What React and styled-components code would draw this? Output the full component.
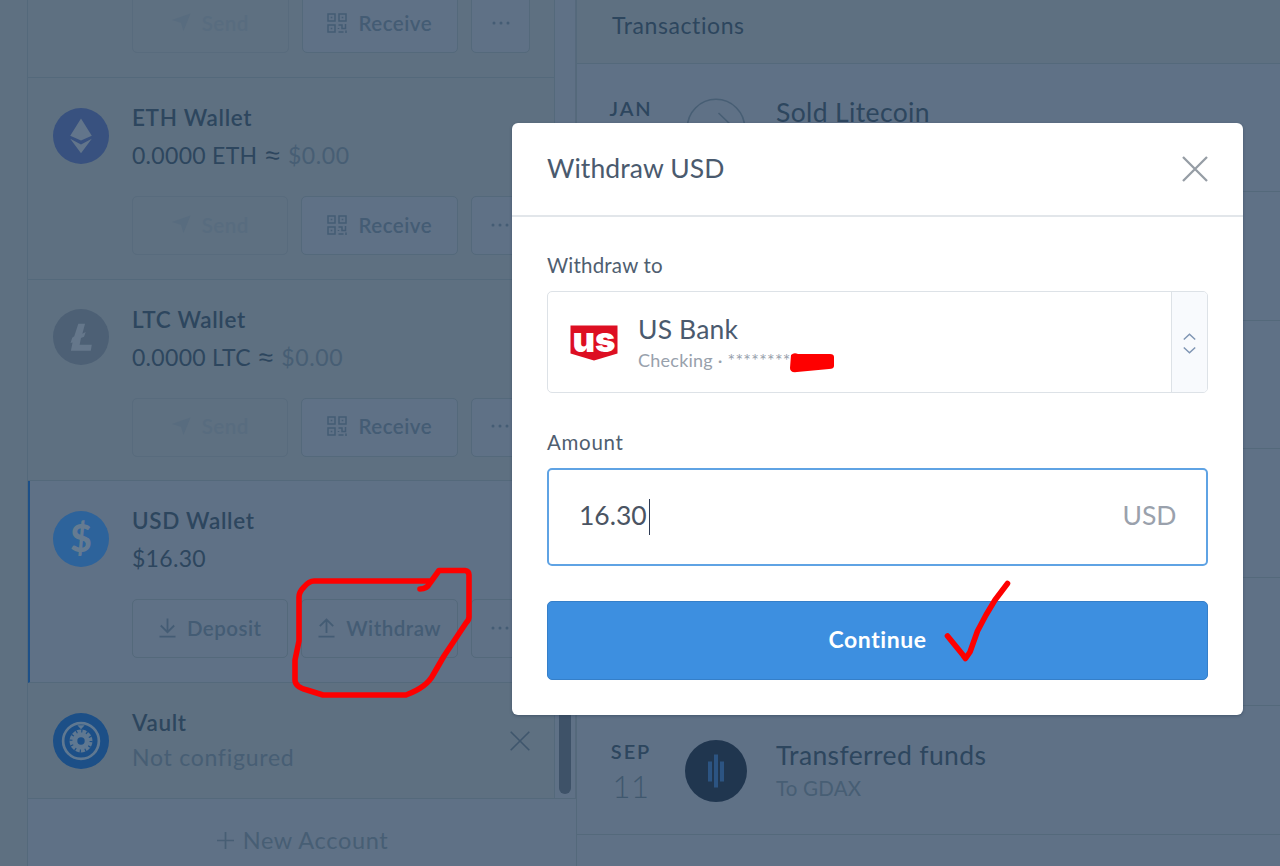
import React from 'react'
import styled, { createGlobalStyle } from 'styled-components';

const page = "#5e7081";
const card = "#5f7186";
const line = "#54697b";
const ink = "#2d465e";
const muted = "#475e74";
const blue = "#3d8fe0";

const GlobalStyle = createGlobalStyle`
    * { box-sizing:border-box; }
    body {
        margin:0;
        background:${page};
        font-family:Lato, "Open Sans", sans-serif;
    }
`
const Screen = styled.div`
    position:relative;
    width:1280px;
    height:866px;
    overflow:hidden;
    display:flex;
    background:${page};
`
const Sidebar = styled.div`
    width:550px;
    margin-left:27px;
    height:866px;
    display:flex;
    flex-direction:column;
    border-left:1px solid ${line};
    border-right:1px solid ${line};
    background:${card};
`
const Scroller = styled.div`
    height:799px;
    display:flex;
    border-bottom:1px solid ${line};
`
const Accounts = styled.div`
    width:527px;
    height:799px;
    overflow:hidden;
    display:flex;
    flex-direction:column;
    justify-content:flex-end;
    border-right:1px solid ${line};
`
const Track = styled.div`
    flex:1;
    display:flex;
    justify-content:center;
    align-items:flex-end;
    padding-bottom:4px;
    border-right:1px solid #56697c;
`
const Thumb = styled.div`
    width:12px;
    height:600px;
    border-radius:6px;
    background:#3e5268;
`
const Account = styled.div`
    flex:none;
    height:${p => p.$short ? "116px" : "201.67px"};
    display:flex;
    padding-left:${p => p.$active ? "22.6px" : "24.6px"};
    border-left:${p => p.$active ? "2px solid #1d5088" : "none"};
    border-bottom:1px solid ${line};
    background:${p => p.$active ? card : page};
`
const LastActions = styled.div`
    flex:none;
    height:78px;
    display:flex;
    align-items:flex-end;
    padding:0 0 24px 104px;
    border-bottom:1px solid ${line};
    background:${page};
`
const Coin = styled.svg`
    flex:none;
    width:56px;
    height:56px;
    margin-top:29.6px;
`
const Details = styled.div`
    flex:1;
    padding:26px 0 0 23.4px;
`
const Name = styled.div`
    height:28px;
    line-height:28px;
    font-size:22.5px;
    font-weight:600;
    letter-spacing:0.68px;
    color:${ink};
    white-space:nowrap;
`
const Balance = styled.div`
    height:38px;
    line-height:38px;
    margin-top:${p => p.$dim ? "0.9px" : "3.9px"};
    font-size:23px;
    letter-spacing:${p => p.$dim ? "0.75px" : "0.3px"};
    color:${p => p.$dim ? muted : ink};
    white-space:nowrap;
`
const Approx = styled.span`
    margin:0 2px 0 1.5px;
    font-family:"Liberation Sans", Arial, sans-serif;
    font-size:26px;
    line-height:1;
`
const Dim = styled.span`
    letter-spacing:0.6px;
    color:${muted};
`
const Actions = styled.div`
    display:flex;
    gap:13px;
    margin-top:${p => p.$flush ? "0" : "22.1px"};
`
const Button = styled.div`
    width:${p => p.$small ? "59px" : "156.5px"};
    height:59px;
    display:flex;
    justify-content:center;
    align-items:center;
    gap:11px;
    padding-bottom:2px;
    border:1px solid ${p => p.$off ? "#586b7d" : line};
    border-radius:5px;
    background:${p => p.$off ? "transparent" : card};
    color:${p => p.$off ? "#586c7f" : "#445c74"};
    font-size:20.5px;
    font-weight:600;
    letter-spacing:0.5px;
`
const Dismiss = styled.svg`
    width:20px;
    height:20px;
    margin:47.5px 24px 0 0;
`
const NewAccount = styled.div`
    height:67px;
    display:flex;
    justify-content:center;
    align-items:center;
    gap:9px;
    padding:15px 0 0 1px;
    color:${muted};
    font-size:23.5px;
    letter-spacing:0.65px;
`
const Transactions = styled.div`
    flex:1;
    height:866px;
    display:flex;
    flex-direction:column;
    background:${card};
`
const Heading = styled.div`
    flex:none;
    height:63.5px;
    padding:9px 0 0 35px;
    line-height:32px;
    font-size:23px;
    letter-spacing:0.6px;
    color:${ink};
    background:${page};
    border-bottom:1px solid ${line};
`
const Entry = styled.div`
    flex:none;
    height:128.6px;
    display:flex;
    border-bottom:1px solid ${line};
`
const When = styled.div`
    width:108px;
    padding-top:31.6px;
    text-align:center;
    color:${ink};
`
const Month = styled.div`
    line-height:26px;
    font-size:20px;
    font-weight:600;
    letter-spacing:1.9px;
`
const Day = styled.div`
    line-height:44px;
    font-size:31px;
    font-weight:300;
    letter-spacing:0.5px;
    color:#40586e;
`
const Badge = styled.svg`
    flex:none;
    width:62px;
    height:62px;
    margin-top:33.5px;
`
const What = styled.div`
    padding:32.8px 0 0 29px;
`
const Summary = styled.div`
    line-height:32px;
    font-size:26.5px;
    letter-spacing:0.37px;
    color:${ink};
`
const Note = styled.div`
    line-height:34px;
    font-size:20.5px;
    letter-spacing:0.2px;
    color:${muted};
`
const Modal = styled.div`
    position:absolute;
    left:512px;
    top:123px;
    width:731px;
    height:592px;
    border-radius:6px;
    background:#fff;
    box-shadow:0 1px 3px rgba(35,55,80,0.45);
`
const ModalHeader = styled.div`
    height:94px;
    display:flex;
    justify-content:space-between;
    align-items:center;
    padding:0 35px;
    border-bottom:2px solid #e2e6ea;
`
const Title = styled.div`
    padding-bottom:2px;
    color:#4a5a6e;
    font-size:26.5px;
    letter-spacing:0.08px;
`
const Form = styled.div`
    display:flex;
    flex-direction:column;
    padding:34px 35px 0;
`
const Label = styled.div`
    height:28px;
    line-height:28px;
    font-size:20.5px;
    letter-spacing:${p => p.$wide ? "0.7px" : "0.2px"};
    color:#4f5e70;
`
const Select = styled.div`
    height:102px;
    display:flex;
    margin:12px 0 35px;
    border:1.5px solid #dde2e7;
    border-radius:5px;
    overflow:hidden;
`
const Bank = styled.div`
    flex:1;
    display:flex;
    align-items:center;
    padding:2px 0 0 22px;
`
const BankLogo = styled.svg`
    width:48px;
    height:36px;
    margin-bottom:1px;
    overflow:visible;
`
const BankText = styled.div`
    margin-left:20px;
`
const BankName = styled.div`
    line-height:34px;
    font-size:26.5px;
    letter-spacing:0.15px;
    color:#4a5a6e;
`
const BankNote = styled.div`
    line-height:28px;
    font-size:18px;
    letter-spacing:0.24px;
    color:#98a1ac;
    white-space:nowrap;
`
const Stepper = styled.div`
    width:36px;
    display:flex;
    justify-content:center;
    align-items:center;
    padding-top:2px;
    border-left:1px solid #dde2e7;
    background:#f8fafd;
`
const Amount = styled.div`
    height:98px;
    display:flex;
    align-items:center;
    margin:12px 0 35px;
    padding:0 29.5px 4px 30px;
    border:2px solid #5fa3e4;
    border-radius:5px;
    color:#4a5462;
    font-size:26.5px;
`
const Caret = styled.div`
    width:1.5px;
    height:36px;
    margin:4px 0 0 2px;
    background:#2f3c55;
`
const Unit = styled.div`
    margin-left:auto;
    color:#9aa1ac;
`
const Continue = styled.div`
    height:79px;
    display:flex;
    justify-content:center;
    align-items:center;
    padding-bottom:4px;
    border:1px solid #357fc9;
    border-radius:5px;
    background:${blue};
    color:#fff;
    font-size:23px;
    font-weight:700;
    letter-spacing:0.55px;
`
const Marks = styled.svg`
    position:absolute;
    left:0;
    top:0;
`

const SendIcon = () => (
    <svg width="19" height="19" viewBox="0 0 19 19" fill="currentColor">
        <path d="M0 7 18.5 0.5 11.5 18 9 9.7Z" />
    </svg>
)
const QrIcon = () => (
    <svg width="20" height="20" viewBox="0 0 20 20" fill="none" stroke="currentColor" strokeWidth="1.5">
        <path d="M1 1h7v7H1zM12 1h7v7h-7zM1 12h7v7H1z" />
        <path d="M3.7 4.5h1.6M14.7 4.5h1.6M3.7 15.5h1.6M11.500 12h3.500v3.500h3.500V11M11.500 15v1M11.500 19h5M19 17.500V20" />
    </svg>
)
const DotsIcon = () => (
    <svg width="18" height="4" viewBox="0 0 18 4" fill="currentColor">
        <circle cx="2" cy="2" r="1.5" /><circle cx="9" cy="2" r="1.5" /><circle cx="16" cy="2" r="1.5" />
    </svg>
)
const DepositIcon = () => (
    <svg width="17" height="20" viewBox="0 0 17 20" fill="none" stroke="currentColor" strokeWidth="1.8">
        <path d="M8.5 0.5V14M1.8 7.5l6.7 6.7 6.7-6.7M0.5 18.7h16" />
    </svg>
)
const WithdrawIcon = () => (
    <svg width="17" height="20" viewBox="0 0 17 20" fill="none" stroke="currentColor" strokeWidth="1.8">
        <path d="M8.5 15V1.5M1.8 8.2l6.7-6.7 6.7 6.7M0.5 18.7h16" />
    </svg>
)

const EthCoin = () => (
    <Coin viewBox="0 0 166 166">
        <circle cx="83" cy="83" r="83" fill="#38517f" />
        <path d="M83 31 115 82 83 96 51 82ZM51 91 83 108 115 91 83 134Z" fill="#62758b" />
    </Coin>
)
const LtcCoin = () => (
    <Coin viewBox="0 0 166 166">
        <circle cx="83" cy="83" r="83" fill="#4d6075" />
        <path d="M75 44H95L87 73 97 68 92 82 83 86 79 106H115L112 124H53L58 99 52 101 57 85 63 81Z" fill="#65778b" />
    </Coin>
)
const UsdCoin = () => (
    <Coin viewBox="0 0 56 56">
        <circle cx="28" cy="28" r="28" fill="#2d639b" />
        <text x="28" y="41" textAnchor="middle" fontSize="37" fontWeight="900" fill="#657b91">$</text>
    </Coin>
)
const VaultCoin = () => (
    <Coin viewBox="0 0 166 166">
        <circle cx="83" cy="83" r="83" fill="#1c4f87" />
        <circle cx="83" cy="83" r="53" fill="none" stroke="#5f7891" strokeWidth="8" />
        <path d="M72 36h22l-11 12z" fill="#5f7891" />
        <circle cx="83" cy="83" r="34" fill="#5f7891" />
        <circle cx="83" cy="83" r="30" fill="none" stroke="#1c4f87" strokeWidth="9" strokeDasharray="3.5 12.208" />
        <circle cx="83" cy="83" r="11" fill="#1c4f87" />
    </Coin>
)

const CryptoActions = ({ flush }) => (
    <Actions $flush={flush}>
        <Button $off><SendIcon />Send</Button>
        <Button><QrIcon />Receive</Button>
        <Button $small><DotsIcon /></Button>
    </Actions>
)

const CryptoAccount = ({ coin, name, balance }) => (
    <Account>
        {coin}
        <Details>
            <Name>{name}</Name>
            <Balance>{balance} <Approx>≈</Approx> <Dim>$0.00</Dim></Balance>
            <CryptoActions />
        </Details>
    </Account>
)

const App = () => {
  return (
    <Screen>
        <GlobalStyle />
        <Sidebar>
            <Scroller>
                <Accounts>
                    <LastActions><CryptoActions flush /></LastActions>
                    <CryptoAccount name="ETH Wallet" balance="0.0000 ETH" coin={<EthCoin />} />
                    <CryptoAccount name="LTC Wallet" balance="0.0000 LTC" coin={<LtcCoin />} />
                    <Account $active>
                        <UsdCoin />
                        <Details>
                            <Name>USD Wallet</Name>
                            <Balance>$16.30</Balance>
                            <Actions>
                                <Button><DepositIcon />Deposit</Button>
                                <Button><WithdrawIcon />Withdraw</Button>
                                <Button $small><DotsIcon /></Button>
                            </Actions>
                        </Details>
                    </Account>
                    <Account $short>
                        <VaultCoin />
                        <Details>
                            <Name>Vault</Name>
                            <Balance $dim>Not configured</Balance>
                        </Details>
                        <Dismiss viewBox="0 0 20 20" stroke="#3f566d" strokeWidth="1.6">
                            <path d="M0.7 0.7 19.3 19.3M19.3 0.7 0.7 19.3" />
                        </Dismiss>
                    </Account>
                </Accounts>
                <Track><Thumb /></Track>
            </Scroller>
            <NewAccount>
                <svg width="17" height="17" viewBox="0 0 17 17" stroke="currentColor" strokeWidth="1.7">
                    <path d="M8.5 0v17M0 8.5h17" />
                </svg>
                New Account
            </NewAccount>
        </Sidebar>
        <Transactions>
            <Heading>Transactions</Heading>
            <Entry>
                <When><Month>JAN</Month></When>
                <Badge viewBox="0 0 62 62" fill="none" stroke={muted} strokeWidth="1.6">
                    <circle cx="31" cy="31" r="28.7" />
                    <path d="M17 31h28M33.5 16 46 28" />
                </Badge>
                <What><Summary>Sold Litecoin</Summary></What>
            </Entry>
            <Entry />
            <Entry />
            <Entry />
            <Entry />
            <Entry>
                <When><Month>SEP</Month><Day>11</Day></When>
                <Badge viewBox="0 0 62 62">
                    <circle cx="31" cy="31" r="31" fill="#20364f" />
                    <path d="M25 21.5v20M31 14.5v33M37 21.5v20" stroke="#2c5482" strokeWidth="4" />
                </Badge>
                <What>
                    <Summary>Transferred funds</Summary>
                    <Note>To GDAX</Note>
                </What>
            </Entry>
        </Transactions>
        <Modal>
            <ModalHeader>
                <Title>Withdraw USD</Title>
                <svg width="26" height="26" viewBox="0 0 26 26" stroke="#969da5" strokeWidth="2.3">
                    <path d="M1 1 25 25M25 1 1 25" />
                </svg>
            </ModalHeader>
            <Form>
                <Label>Withdraw to</Label>
                <Select>
                    <Bank>
                        <BankLogo viewBox="0 0 48 36">
                            <path d="M0.5 0.5h47v28L24 35.5 0.5 28.5z" fill="#dd0f22" />
                            <text x="24" y="27" textAnchor="middle" textLength="43" lengthAdjust="spacingAndGlyphs" fontFamily="Inter, sans-serif" fontSize="35" fontWeight="900" fill="#fff">us</text>
                        </BankLogo>
                        <BankText>
                            <BankName>US Bank</BankName>
                            <BankNote>Checking · ********</BankNote>
                        </BankText>
                    </Bank>
                    <Stepper>
                        <svg width="13" height="21" viewBox="0 0 13 21" fill="none" stroke="#7f95b3" strokeWidth="1.5">
                            <path d="M0.8 6.5 6.5 1.2 12.2 6.5M0.8 14.5 6.5 19.8 12.2 14.5" />
                        </svg>
                    </Stepper>
                </Select>
                <Label $wide>Amount</Label>
                <Amount>16.30<Caret /><Unit>USD</Unit></Amount>
                <Continue>Continue</Continue>
            </Form>
        </Modal>
        <Marks width="1280" height="866" viewBox="0 0 1280 866" fill="none" stroke="#fe0000" strokeWidth="5.6" strokeLinecap="round" strokeLinejoin="round">
            <path d="M420 589Q427 589 430 583L439 570.5H465Q469 571 469 575V617Q469 620 466 623L444 656 433 675Q427 687 406 695H323L307 690Q295 687 295 680V660L299 641V597Q299 592 304 587 309 581 314 581H430" />
            <path d="M947.500 636 963 655 965.500 658.500 970 652 977.500 631 986 615 995 600 1007.500 583.500" />
            <path d="M791 355Q794 352 798 354H830Q834 354 834 357V366Q834 369 829 369L797 372Q790 373 790 368Z" fill="#fe0000" stroke="none" />
        </Marks>
    </Screen>
  )
}

export default App
